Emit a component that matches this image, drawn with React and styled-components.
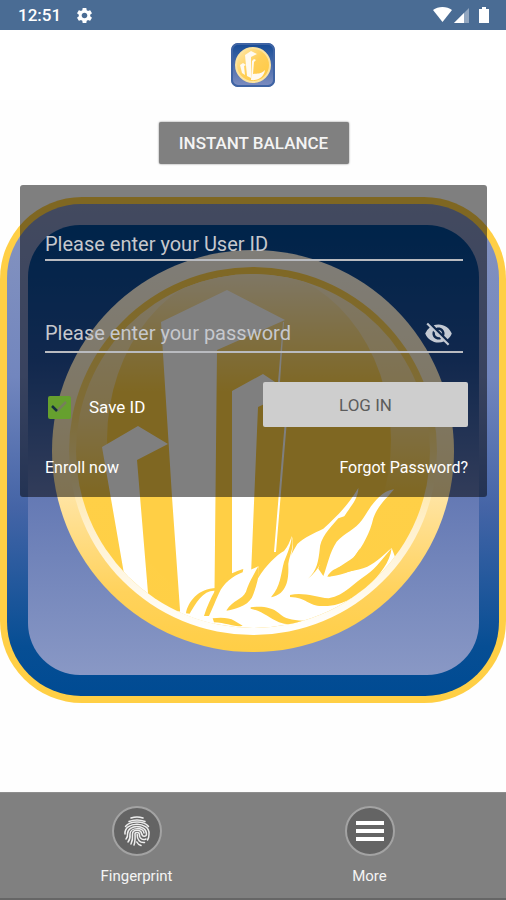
import React, { useId, useState } from "react";
import styled, { createGlobalStyle } from "styled-components";
import { MdSettings, MdVisibilityOff, MdVisibility } from "react-icons/md";

const GlobalStyle = createGlobalStyle`
  * { box-sizing: border-box; }
  body {
    margin: 0;
    background: #fefefe;
    font-family: Roboto, "Liberation Sans", sans-serif;
  }
  button, input { font: inherit; }
`;

const Screen = styled.div`
  min-height: 100vh;
  display: flex;
  flex-direction: column;
`;

const StatusBar = styled.div`
  height: 30px;
  padding: 0 16px 0 18px;
  display: flex;
  align-items: center;
  justify-content: space-between;
  background: #4a6c94;
  color: #fff;
`;

const StatusGroup = styled.div`
  display: flex;
  align-items: center;
  gap: 14px;
  font-size: 17px;
  font-weight: 500;
  line-height: 20px;
`;

const Header = styled.header`
  height: 70px;
  display: flex;
  align-items: center;
  justify-content: center;
  background: #fff;
`;

const LogoFrame = styled.div`
  width: 44px;
  height: 44px;
  border-radius: 7px;
  overflow: hidden;
  background: #2c5297;
  svg { display: block; width: 100%; height: 100%; }
`;

const Main = styled.main`
  flex: 1;
  display: grid;
  grid-template-columns: 100%;
`;

const Backdrop = styled.div`
  grid-area: 1 / 1;
  align-self: center;
  padding-top: 8px;
  svg { display: block; width: 100%; }
`;

const Content = styled.div`
  grid-area: 1 / 1;
  z-index: 1;
  padding: 22px 19px 0 20px;
  display: flex;
  flex-direction: column;
  align-items: center;
  gap: 21px;
`;

const BalanceButton = styled.button`
  width: 190px;
  height: 42px;
  padding: 0;
  border: 0;
  border-radius: 2px;
  background: #808080;
  color: #f4f4f4;
  font-size: 17px;
  font-weight: 500;
  box-shadow: 0 0 2px #777;
`;

const Panel = styled.form`
  width: 100%;
  height: 312px;
  padding: 44px 19px 0 25px;
  border-radius: 3px;
  background: rgba(0, 0, 0, 0.5);
  color: #fff;
`;

const Field = styled.label`
  display: flex;
  align-items: center;
  height: ${(p) => p.$height}px;
  margin: 0 5px ${(p) => p.$after}px 0;
  border-bottom: 2px solid #b9bbc0;
`;

const TextInput = styled.input`
  flex: 1;
  min-width: 0;
  padding: 0;
  border: 0;
  outline: 0;
  background: transparent;
  color: #fff;
  font-size: 20px;
  line-height: 24px;
  &::placeholder { color: #c6c8cd; opacity: 1; }
`;

const IconButton = styled.button`
  display: flex;
  padding: 0 10px 0 0;
  border: 0;
  background: none;
  color: #c3c9d3;
`;

const Row = styled.div`
  display: flex;
  align-items: center;
  justify-content: space-between;
  margin-bottom: ${(p) => p.$after || 0}px;
`;

const SaveLabel = styled.label`
  display: grid;
  grid-template-columns: 23px auto;
  align-items: center;
  column-gap: 18px;
  padding: 5px 0 0 3px;
  font-size: 17px;
  line-height: 23px;
  svg { grid-area: 1 / 1; pointer-events: none; justify-self: center; }
  input:not(:checked) + svg { visibility: hidden; }
`;

const CheckBox = styled.input`
  grid-area: 1 / 1;
  appearance: none;
  width: 23px;
  height: 23px;
  margin: 0;
  border-radius: 2px;
  background: #66a02e;
`;

const LoginButton = styled.button`
  width: 205px;
  height: 45px;
  border: 0;
  border-radius: 2px;
  background: #cecece;
  color: #5c5c5c;
  font-size: 17px;
`;

const TextLink = styled.a`
  color: #fff;
  font-size: 16px;
  line-height: 22px;
  text-decoration: none;
`;

const BottomNav = styled.nav`
  height: 108px;
  padding: 13px 20px 0;
  display: grid;
  grid-template-columns: 1fr 1fr;
  background: #808080;
  border-top: 1px solid #8e8e8e;
  border-bottom: 2px solid #666;
`;

const NavButton = styled.button`
  display: flex;
  flex-direction: column;
  align-items: center;
  gap: 10px;
  padding: 0;
  border: 0;
  background: none;
  color: #f4f4f4;
  font-size: 15px;
  line-height: 20px;
`;

const NavCircle = styled.span`
  width: 50px;
  height: 50px;
  display: flex;
  align-items: center;
  justify-content: center;
  border: 2px solid #a3a3a3;
  border-radius: 50%;
  background: #646464;
`;

function Emblem() {
  const id = useId().replace(/[^a-zA-Z0-9]/g, "");
  const ref = (name) => `url(#${id}${name})`;
  return (
    <svg viewBox="0 197 506 506" aria-hidden="true">
      <defs>
        <linearGradient id={`${id}rim`} x1="0" y1="0" x2="0" y2="1">
          <stop offset="0" stopColor="#8694bf" />
          <stop offset=".35" stopColor="#7286be" />
          <stop offset=".62" stopColor="#4464a6" />
          <stop offset=".9" stopColor="#064e94" />
          <stop offset="1" stopColor="#004b93" />
        </linearGradient>
        <linearGradient id={`${id}field`} x1="0" y1="0" x2="0" y2="1">
          <stop offset="0" stopColor="#004894" />
          <stop offset=".3" stopColor="#22509b" />
          <stop offset=".6" stopColor="#6479b4" />
          <stop offset="1" stopColor="#8998c5" />
        </linearGradient>
        <linearGradient id={`${id}ring`} x1="0" y1="0" x2="0" y2="1">
          <stop offset="0" stopColor="#fffaf0" />
          <stop offset=".35" stopColor="#fff0cc" />
          <stop offset=".6" stopColor="#ffe5a6" />
          <stop offset=".85" stopColor="#ffd25c" />
          <stop offset="1" stopColor="#ffce45" />
        </linearGradient>
        <linearGradient id={`${id}line`} x1="0" y1="0" x2="0" y2="1">
          <stop offset="0" stopColor="#ffd04a" />
          <stop offset=".4" stopColor="#ffda70" />
          <stop offset=".7" stopColor="#fff0cc" />
          <stop offset="1" stopColor="#ffffff" />
        </linearGradient>
        <linearGradient id={`${id}glare`} x1="0" y1="0" x2="0" y2="1">
          <stop offset="0" stopColor="#fff0cf" />
          <stop offset=".4" stopColor="#ffe090" />
          <stop offset=".62" stopColor="#ffd047" />
          <stop offset="1" stopColor="#ffcf45" />
        </linearGradient>
        <linearGradient id={`${id}disc`} x1="0" y1="0" x2="0" y2="1">
          <stop offset="0" stopColor="#fff0d0" />
          <stop offset=".36" stopColor="#ffcf45" />
          <stop offset="1" stopColor="#ffcf45" />
        </linearGradient>
        <clipPath id={`${id}clip`}>
          <circle cx="253" cy="451" r="177" />
        </clipPath>
      </defs>
      <rect x="0" y="197" width="506" height="506" rx="82" fill="#ffcf45" />
      <rect x="7" y="204" width="492" height="492" rx="74" fill={ref("rim")} />
      <rect x="28" y="225" width="451" height="450" rx="52" fill={ref("field")} />
      <circle cx="253" cy="451" r="201" fill={ref("ring")} />
      <circle cx="253" cy="451" r="184" fill={ref("line")} />
      <circle cx="253" cy="451" r="177" fill={ref("glare")} />
      <g clipPath={ref("clip")}>
        <ellipse cx="249" cy="440" rx="142" ry="172" fill={ref("disc")} />
        <g fill="#fff">
          <path d="M161 322 L227 290 L285 320 L217 350 L214 640 L180 640 L180 610 L172 497 Z" />
          <path d="M102 447 L138 426 L168 444 L137 460 L148 593 L148 620 L130 615 L123 568 Z" />
          <path d="M232 391 L263 374 L290 392 L258 407 L251 575 L232 580 Z" />
          <path d="M283 322 L284 322 L280 382 L278 382 Z M287 396 L289 396 L276 552 L274 552 Z" />
        </g>
        <g transform="translate(160 470) scale(.33333)">
          <path
            fill="#fff"
            d="M50 422 L80 430 C95 395 120 365 162 360 L160 400 C172 350 205 312 250 304 C270 301 285 294 295 289 C300 296 292 320 294 325
               C318 285 350 255 372 243 C384 230 389 216 395 199 C402 212 400 240 390 265 C395 250 402 240 412 222 C435 200 462 190 490 176
               C530 140 565 105 595 54 C596 85 570 112 552 140 C527 174 496 200 490 235 C488 258 480 280 475 296 L490 318
               C503 285 508 248 530 215 C553 190 586 178 606 150 C630 115 655 65 702 58 C681 85 654 105 640 145 C630 190 607 230 586 256
               C572 274 537 285 506 320 C550 306 590 303 622 290 C651 276 670 255 695 234 L720 300 L600 470 L360 560 L120 520 Z"
          />
          <g fill="#ffcf45">
            <path d="M78 430 C83 397 115 354 169 354 L165 362 C130 360 108 398 89 431 Z" />
            <path d="M132 438 C141 409 152 385 165 362 L170 350 C199 310 238 301 250 297 L248 307 C220 317 190 340 177 370 C165 396 158 415 147 438 Z" />
            <path d="M200 420 C218 390 246 390 258 365 C266 340 276 323 295 289 C301 310 289 348 280 373 C271 402 239 416 200 422 Z" />
            <path d="M334 380 C362 350 362 313 372 276 C382 251 394 224 395 199 C407 230 382 267 385 291 C386 328 381 372 334 382 Z" />
            <path d="M444 326 C472 300 475 273 479 239 C480 205 509 174 535 145 L555 138 C534 180 499 202 494 230 C492 267 478 298 444 326 Z" />
            <path d="M502 320 C519 288 555 294 580 265 L600 235 C593 260 589 282 600 295 C573 302 538 319 502 320 Z" />
            <path d="M390 375 C426 365 466 380 506 385 C556 375 582 338 620 314 C650 293 670 263 695 234 C690 279 658 313 630 344 C594 372 553 409 490 408 C446 410 440 382 390 381 Z" />
            <path d="M272 412 C300 408 335 410 356 429 C376 447 393 450 430 452 C405 464 382 466 357 457 C325 443 312 426 272 416 Z" />
            <path d="M158 445 C183 442 208 443 223 452 L248 467 C225 473 202 459 162 457 Z" />
          </g>
        </g>
      </g>
    </svg>
  );
}

function Logo() {
  return (
    <svg viewBox="0 0 44 44" role="img" aria-label="Credit union logo">
      <defs>
        <linearGradient id="logoField" x1="0" y1="0" x2="0" y2="1">
          <stop offset="0" stopColor="#164b96" />
          <stop offset="1" stopColor="#7d8dc0" />
        </linearGradient>
        <linearGradient id="logoDisc" x1="0" y1="0" x2="1" y2="1">
          <stop offset="0" stopColor="#ffe9ac" />
          <stop offset=".5" stopColor="#ffcf58" />
          <stop offset="1" stopColor="#ffc940" />
        </linearGradient>
      </defs>
      <rect x="1" y="1" width="42" height="42" rx="6" fill="url(#logoField)" stroke="#3f64a4" strokeWidth="2" />
      <circle cx="22" cy="22" r="17" fill="url(#logoDisc)" stroke="#fbe3a0" strokeWidth="2" />
      <g fill="#fffaf0">
        <path d="M14 12 L20 8 L26 11 L20 14 L20 35 L16 33 Z" />
        <path d="M9 22 L12 20 L15 22 L13 23 L14 32 L11 30 Z" />
        <path d="M21 18 L23 16 L25 17 L23 19 L22 31 C26 30 29 32 34 27 C33 34 27 38 20 37 Z" />
      </g>
    </svg>
  );
}

function SignalIcons() {
  return (
    <svg width="58" height="18" viewBox="0 0 58 18" fill="#fff" aria-hidden="true">
      <path d="M1 4 C6 0 15 0 20 4 L10.500 16 Z" />
      <path d="M22 17 L37 2 V17 Z" opacity=".4" />
      <path d="M22 17 L32 7 V17 Z" />
      <path d="M47 3 H50 V1 H54 V3 H57 V17 H47 Z" />
    </svg>
  );
}

function TickMark() {
  return (
    <svg width="19" height="19" viewBox="0 0 19 19" fill="none" strokeWidth="2.500" aria-hidden="true">
      <path d="M7 13 L16 4" stroke="#777f5b" />
      <path d="M2 8 L7 13" stroke="#14303f" />
    </svg>
  );
}

function FingerprintIcon() {
  return (
    <svg width="28" height="32" viewBox="0 0 28 32" fill="none" stroke="#eee" strokeWidth="1.500" strokeLinecap="round" aria-hidden="true">
      <path d="M8 3 Q14 1 20 3" />
      <path d="M6 6.500 Q14 3.500 22 6.500" />
      <path d="M2.500 11.500 C7 5.500 21 5.500 25.500 11.500" />
      <path d="M2 19 C1 6 27 6 26 19 Q26 23 24.500 25" />
      <path d="M3 24 Q5 22 4.500 19 C4.500 9 23.500 9 23.500 19 C23.500 22 19 22 19 19" />
      <path d="M5 27 Q7.500 24 7 19 C7 12 21 12 21 18" />
      <path d="M8 29 Q10 25 9.500 19 C9.500 14 18.500 14 18.500 19" />
      <path d="M11 30 Q12.500 26 12 19 C12 17 16.300 17 16.300 19 C16.300 24 20 25.500 23 24" />
      <path d="M14.200 19.500 C14 25 17 28 21.500 27.500" />
      <path d="M13.800 27 Q15 29.500 18 30.500" />
    </svg>
  );
}

export default function App() {
  const [visible, setVisible] = useState(false);
  return (
    <Screen>
      <GlobalStyle />
      <StatusBar>
        <StatusGroup>
          <span>12:51</span>
          <MdSettings size={19} />
        </StatusGroup>
        <StatusGroup>
          <SignalIcons />
        </StatusGroup>
      </StatusBar>
      <Header>
        <LogoFrame><Logo /></LogoFrame>
      </Header>
      <Main>
        <Backdrop><Emblem /></Backdrop>
        <Content>
          <BalanceButton type="button">INSTANT BALANCE</BalanceButton>
          <Panel onSubmit={(e) => e.preventDefault()}>
            <Field $height={32} $after={54}>
              <TextInput type="text" aria-label="User ID" placeholder="Please enter your User ID" />
            </Field>
            <Field $height={38} $after={29}>
              <TextInput
                type={visible ? "text" : "password"}
                aria-label="Password"
                placeholder="Please enter your password"
              />
              <IconButton type="button" aria-label="Show password" onClick={() => setVisible(!visible)}>
                {visible ? <MdVisibility size={29} /> : <MdVisibilityOff size={29} />}
              </IconButton>
            </Field>
            <Row $after={30}>
              <SaveLabel>
                <CheckBox type="checkbox" defaultChecked />
                <TickMark />
                Save ID
              </SaveLabel>
              <LoginButton type="submit">LOG IN</LoginButton>
            </Row>
            <Row>
              <TextLink href="#enroll">Enroll now</TextLink>
              <TextLink href="#forgot">Forgot Password?</TextLink>
            </Row>
          </Panel>
        </Content>
      </Main>
      <BottomNav>
        <NavButton type="button">
          <NavCircle><FingerprintIcon /></NavCircle>
          Fingerprint
        </NavButton>
        <NavButton type="button">
          <NavCircle>
            <svg width="28" height="20" viewBox="0 0 28 20" fill="#fff" aria-hidden="true">
              <path d="M0 0h28v4H0z M0 8h28v4H0z M0 16h28v4H0z" />
            </svg>
          </NavCircle>
          More
        </NavButton>
      </BottomNav>
    </Screen>
  );
}
